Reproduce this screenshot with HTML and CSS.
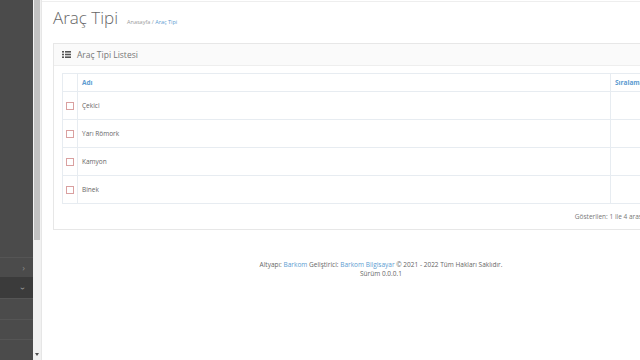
FILE: index.html
```html
<!DOCTYPE html>
<html>
<head>
    <meta charset="utf-8">
    <title>Araç Tipi</title>
    <link rel="stylesheet" href="styles.css">
</head>
<body>
    <div class="page">
        <div class="sidebar">
            <div class="side-item tall"></div>
            <div class="side-item"><span class="chev">&#8250;</span></div>
            <div class="side-item active"><span class="chev down">&#8250;</span></div>
            <div class="side-item"></div>
            <div class="side-item"></div>
            <div class="side-item"></div>
        </div>
        <div class="scrollbar">
            <div class="thumb"></div>
            <div class="arrow"></div>
        </div>
        <div class="main">
            <div class="page-head">
                <h1>Araç Tipi</h1>
                <span class="crumbs"><span>Anasayfa</span> / <a>Araç Tipi</a></span>
            </div>
            <div class="portlet">
                <div class="portlet-title">
                    <svg class="list-icon" width="9" height="7" viewBox="0 0 9 7">
                        <rect x="0" y="0" width="2" height="1.6" fill="#555"/>
                        <rect x="3" y="0" width="6" height="1.6" fill="#555"/>
                        <rect x="0" y="2.7" width="2" height="1.6" fill="#555"/>
                        <rect x="3" y="2.7" width="6" height="1.6" fill="#555"/>
                        <rect x="0" y="5.4" width="2" height="1.6" fill="#555"/>
                        <rect x="3" y="5.4" width="6" height="1.6" fill="#555"/>
                    </svg>
                    <span>Araç Tipi Listesi</span>
                </div>
                <div class="portlet-body">
                    <table class="grid">
                        <thead>
                            <tr>
                                <th class="chk-col"></th>
                                <th>Adı</th>
                                <th class="order-col">Sıralama</th>
                            </tr>
                        </thead>
                        <tbody>
                            <tr><td class="chk-col"><span class="box"></span></td><td>Çekici</td><td class="order-col"></td></tr>
                            <tr><td class="chk-col"><span class="box"></span></td><td>Yarı Römork</td><td class="order-col"></td></tr>
                            <tr><td class="chk-col"><span class="box"></span></td><td>Kamyon</td><td class="order-col"></td></tr>
                            <tr><td class="chk-col"><span class="box"></span></td><td>Binek</td><td class="order-col"></td></tr>
                        </tbody>
                    </table>
                    <div class="info">Gösterilen: 1 ile 4 arası, Toplam 4 kayıt</div>
                </div>
            </div>
            <div class="footer">
                Altyapı: <a>Barkom</a> Geliştirici: <a>Barkom Bilgisayar</a> © 2021 - 2022 Tüm Hakları Saklıdır.<br>
                Sürüm 0.0.0.1
            </div>
        </div>
    </div>
</body>
</html>
```
FILE: styles.css
```css
* {
    margin: 0;
    padding: 0;
    box-sizing: border-box;
}

body {
    font-family: 'Open Sans', sans-serif;
    background: #fff;
    overflow: hidden;
    width: 640px;
    height: 360px;
}

.page {
    display: flex;
    height: 360px;
}

.sidebar {
    width: 33px;
    flex-shrink: 0;
    background: #4b4b4b;
    display: flex;
    flex-direction: column;
}

.side-item {
    height: 21px;
    border-top: 1px solid #555;
    display: flex;
    align-items: center;
    justify-content: flex-end;
    padding-right: 8px;
}

.side-item.tall {
    height: 261px;
    border-top: none;
}

.side-item.active {
    background: #3b3b3b;
    border-top-color: #3b3b3b;
}

.chev {
    color: #888;
    font-size: 9px;
    line-height: 1;
}

.chev.down {
    color: #aaa;
    transform: rotate(90deg);
}

.scrollbar {
    width: 9px;
    flex-shrink: 0;
    background: #f1f1f1;
    position: relative;
    border-right: 1px solid #e6e6e6;
}

.thumb {
    margin: 0 1px;
    height: 240px;
    background: #c1c1c1;
}

.arrow {
    position: absolute;
    left: 2px;
    bottom: 4px;
    border-left: 2.5px solid transparent;
    border-right: 2.5px solid transparent;
    border-top: 3px solid #505050;
}

.main {
    width: 678px;
    flex-shrink: 0;
    padding: 0 11px;
    border-top: 1px solid #eee;
    margin-top: 1px;
}

.page-head {
    display: flex;
    align-items: baseline;
    gap: 9px;
    height: 41px;
    padding-top: 4px;
}

h1 {
    font-size: 17px;
    font-weight: 300;
    color: #666;
}

.crumbs {
    font-size: 5.5px;
    color: #999;
}

.crumbs a {
    color: #5b9bd1;
}

.portlet {
    border: 1px solid #e7e7e7;
}

.portlet-title {
    background: #fafafa;
    height: 22px;
    border-bottom: 1px solid #eee;
    display: flex;
    align-items: center;
    gap: 6px;
    padding-left: 8px;
    font-size: 8.5px;
    color: #777;
}

.portlet-body {
    padding: 7px 8px 0;
}

.grid {
    width: 100%;
    border-collapse: collapse;
    border: 1px solid #e7ecf1;
    font-size: 6.5px;
    color: #666;
}

.grid th {
    height: 18px;
    text-align: left;
    color: #5b9bd1;
    font-weight: 700;
    padding-left: 4px;
    border-bottom: 1px solid #e7ecf1;
}

.grid td {
    height: 28px;
    padding-left: 4px;
    border-bottom: 1px solid #e7ecf1;
}

.grid .chk-col {
    width: 15px;
    border-right: 1px solid #e7ecf1;
    padding-left: 3px;
}

.grid .order-col {
    width: 89px;
    border-left: 1px solid #e7ecf1;
}

.box {
    display: block;
    width: 8px;
    height: 8px;
    border: 1px solid #d9a0a0;
    background: #fff;
}

.info {
    text-align: right;
    font-size: 6.5px;
    color: #777;
    padding: 8px 9px 8px;
}

.footer {
    text-align: center;
    font-size: 6.5px;
    color: #666;
    line-height: 9px;
    margin-top: 30px;
}

.footer a {
    color: #5b9bd1;
}
```
